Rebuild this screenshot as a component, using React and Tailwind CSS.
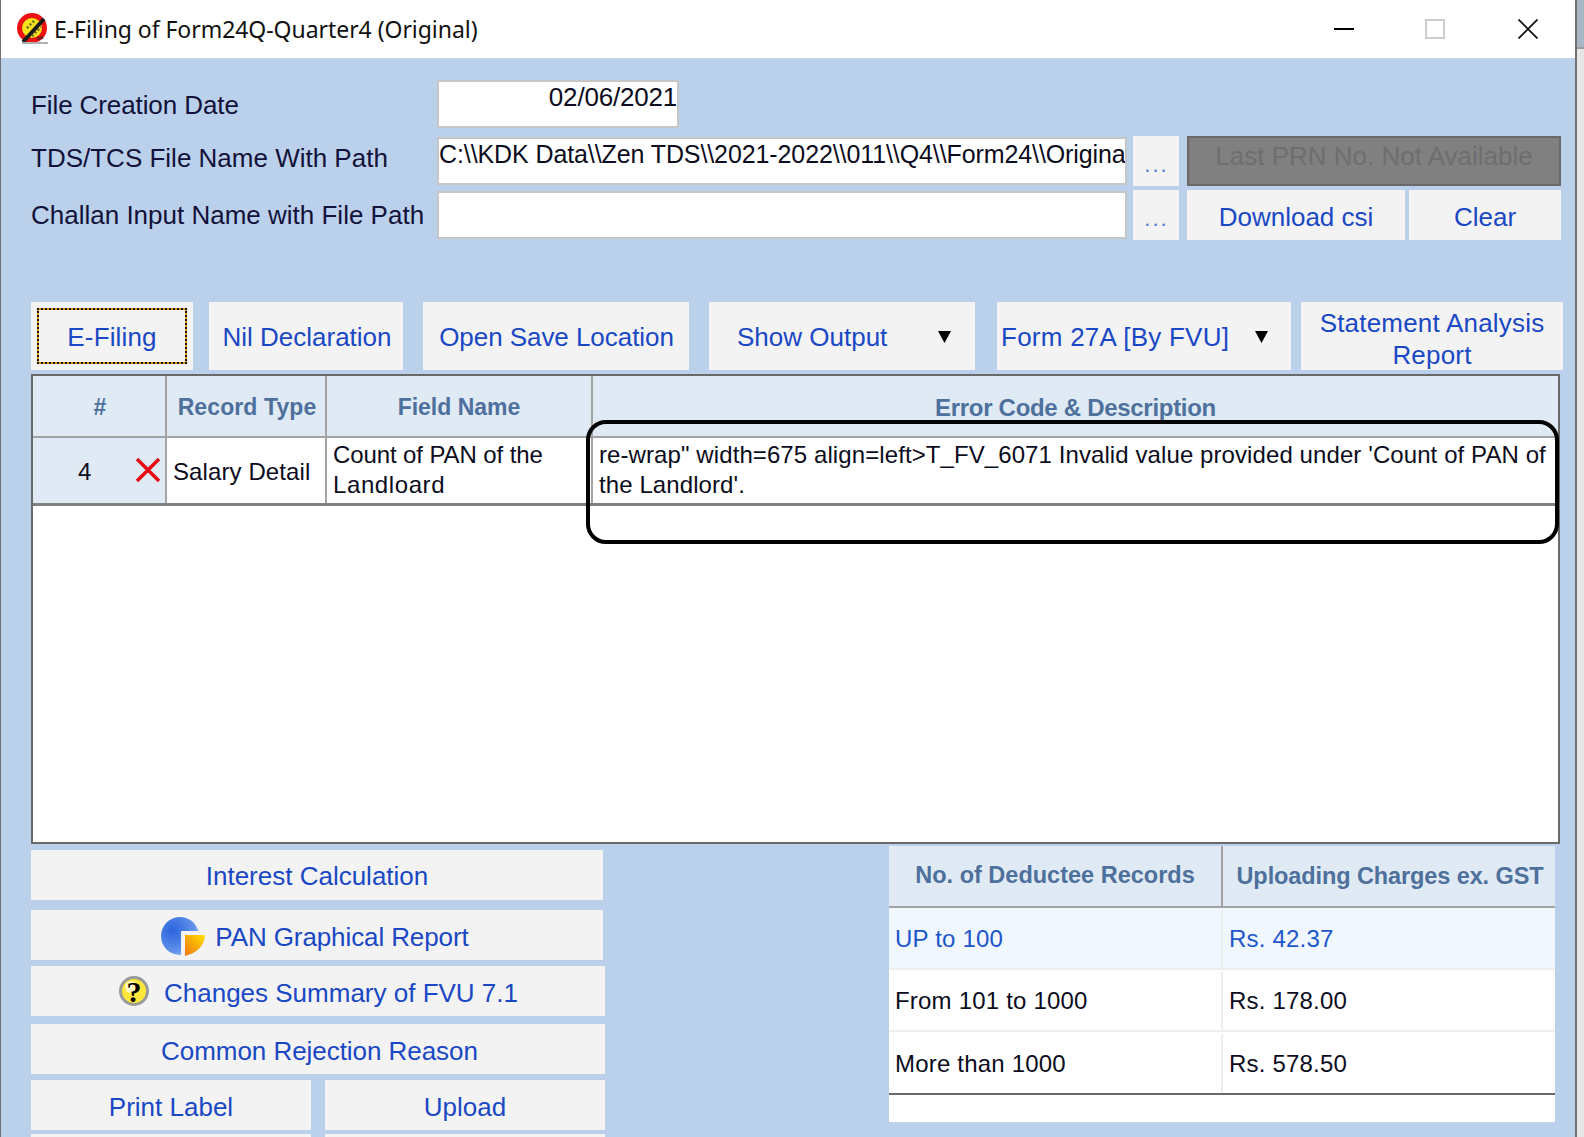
const Btn = ({ className = '', children }) => (
  <div className={`bg-[#f3f3f3] text-[#1a48c4] text-[26px] leading-[30px] flex items-center justify-center text-center ${className}`}>
    {children}
  </div>
);

const Field = ({ className = '', children }) => (
  <div className={`bg-white border-2 border-[#c6c6c6] text-[25px] leading-[30px] text-[#0c0c20] overflow-hidden whitespace-nowrap ${className}`}>
    {children}
  </div>
);

const Dots = () => (
  <Btn className="w-[46px] h-[50px] ml-[6px] pt-[8px] pl-[1px] !text-[#4a7fd6] !text-[22px] tracking-[2px]">...</Btn>
);

const Caret = () => (
  <svg width="13" height="12" viewBox="0 0 13 12" className="shrink-0">
    <polygon points="0,0 13,0 6.5,12" fill="#000" />
  </svg>
);

const TitleIcon = () => (
  <svg width="32" height="32" viewBox="0 0 32 32" className="shrink-0">
    <circle cx="15" cy="15" r="12.5" fill="#f4e21c" stroke="#ee1111" strokeWidth="5" />
    <path d="M6 29 L27 6" stroke="#1a1a1a" strokeWidth="4" />
    <path d="M10 15 L17 8 M15 23 L24 14" stroke="#6a6a20" strokeWidth="2.5" strokeDasharray="2 2" />
    <path d="M20 26 L26 24" stroke="#8a1a1a" strokeWidth="3" />
    <path d="M5 30 L31 30" stroke="#b0b0b0" strokeWidth="2" />
  </svg>
);

const PieIcon = () => (
  <svg width="46" height="42" viewBox="0 0 46 42" className="shrink-0">
    <defs>
      <radialGradient id="pieBlue" cx="0.3" cy="0.35" r="0.8">
        <stop offset="0" stopColor="#2c62dc" />
        <stop offset="0.7" stopColor="#5f92ea" />
        <stop offset="1" stopColor="#a8c4f0" />
      </radialGradient>
      <linearGradient id="pieOrange" x1="1" y1="0" x2="0" y2="1">
        <stop offset="0" stopColor="#ffe000" />
        <stop offset="1" stopColor="#f07810" />
      </linearGradient>
    </defs>
    <circle cx="19" cy="20" r="19" fill="url(#pieBlue)" />
    <rect x="20" y="15" width="26" height="27" fill="#f3f3f3" />
    <path d="M24 19 L44 19 Q43 35 24 40 Z" fill="url(#pieOrange)" />
  </svg>
);

const HelpIcon = () => (
  <svg width="32" height="32" viewBox="0 0 32 32" className="shrink-0 -mt-[4px]">
    <circle cx="16" cy="16" r="13.5" fill="#fde83a" stroke="#9a9a9a" strokeWidth="3" />
    <circle cx="13" cy="12" r="6" fill="#fff8c0" />
    <text x="16" y="27" textAnchor="middle" fontSize="30" fontWeight="700" fill="#000" fontFamily="'Liberation Serif', serif">?</text>
  </svg>
);

const headCell = 'flex items-center justify-center font-bold text-[#4d709c] pt-[3px]';
const headLine = 'border-r-2 border-[#a3a3a3]';

export default function App() {
  return (
    <div className="w-[1584px] h-[1137px] overflow-hidden flex font-['Liberation_Sans',Arial,sans-serif]">
      <div className="w-[1575px] h-full flex flex-col border-l border-[#707070]">
        {/* title bar */}
        <div className="h-[58px] shrink-0 bg-white flex items-center pl-[16px]">
          <TitleIcon />
          <span className="ml-[5px] text-[23px] tracking-[-0.05px] text-[#111] font-['Noto_Sans',sans-serif]">E-Filing of Form24Q-Quarter4 (Original)</span>
          <div className="ml-auto flex items-center">
            <div className="w-[20px] h-[2px] bg-black" />
            <div className="w-[20px] h-[20px] border-2 border-[#cccccc] ml-[71px]" />
            <svg width="20" height="20" viewBox="0 0 20 20" className="ml-[73px] mr-[37px]">
              <path d="M0.5 0.5 L19.5 19.5 M19.5 0.5 L0.5 19.5" stroke="#111" strokeWidth="1.8" />
            </svg>
          </div>
        </div>

        {/* form */}
        <div className="flex-1 min-h-0 bg-[#bbd0eb] pl-[30px] flex flex-col">
          <div className="flex items-center h-[48px] mt-[22px] shrink-0">
            <span className="w-[407px] text-[26px] text-[#12123a] tracking-[-0.1px] pt-[2px]">File Creation Date</span>
            <Field className="w-[242px] h-[48px] text-right !text-[26px] tracking-[-0.2px] -ml-[1px]">02/06/2021</Field>
          </div>
          <div className="flex items-center h-[50px] mt-[8px] shrink-0">
            <span className="w-[407px] text-[26px] text-[#12123a] -mt-[5px]">TDS/TCS File Name With Path</span>
            <Field className="w-[690px] h-[48px] -ml-[1px] tracking-[-0.1px]">{'C:\\\\KDK Data\\\\Zen TDS\\\\2021-2022\\\\011\\\\Q4\\\\Form24\\\\Origina'}</Field>
            <Dots />
            <div className="w-[374px] h-[50px] ml-[8px] pb-[10px] bg-[#808080] border-2 border-[#696969] text-[#6e6e6e] text-[26px] flex items-center justify-center">Last PRN No. Not Available</div>
          </div>
          <div className="flex items-center h-[50px] mt-[4px] shrink-0">
            <span className="w-[407px] text-[26px] text-[#12123a]">Challan Input Name with File Path</span>
            <Field className="w-[690px] h-[48px] -ml-[1px]" />
            <Dots />
            <Btn className="w-[218px] h-[50px] ml-[8px] pt-[3px]">Download csi</Btn>
            <Btn className="w-[152px] h-[50px] ml-[4px] pt-[3px]">Clear</Btn>
          </div>

          {/* toolbar */}
          <div className="flex h-[68px] mt-[62px] shrink-0">
            <Btn className="w-[162px] p-[6px]">
              <div className="w-full h-full border-2 border-dotted border-[#1a1208] bg-[#e59a1c]">
                <div className="w-full h-full bg-[#f3f3f3] flex items-center justify-center pt-[2px] tracking-[0.15px]">E-Filing</div>
              </div>
            </Btn>
            <Btn className="w-[194px] ml-[16px] pt-[2px] pl-[2px]">Nil Declaration</Btn>
            <Btn className="w-[266px] ml-[20px] pt-[2px] pl-[1px] tracking-[-0.05px]">Open Save Location</Btn>
            <Btn className="w-[266px] ml-[20px] !justify-start pl-[28px] pt-[2px]">
              <span>Show Output</span>
              <span className="ml-[51px]"><Caret /></span>
            </Btn>
            <Btn className="w-[294px] ml-[22px] !justify-start pl-[4px] pt-[2px]">
              <span className="tracking-[0.25px]">Form 27A [By FVU]</span>
              <span className="ml-[26px]"><Caret /></span>
            </Btn>
            <Btn className="w-[262px] ml-[10px] !leading-[32px] pt-[6px] tracking-[0.2px]">Statement Analysis<br />Report</Btn>
          </div>

          {/* error grid */}
          <div className="relative w-[1529px] h-[470px] mt-[4px] shrink-0 bg-white border-2 border-[#696969]">
            <div className="grid grid-cols-[134px_160px_266px_1fr] h-[62px] bg-[#e0eaf4] border-b-2 border-[#a3a3a3]">
              <div className={`${headCell} ${headLine} text-[23px] pl-[2px]`}>#</div>
              <div className={`${headCell} ${headLine} text-[23px] tracking-[0.1px] pl-[2px]`}>Record Type</div>
              <div className={`${headCell} ${headLine} text-[23px]`}>Field Name</div>
              <div className={`${headCell} text-[24px] tracking-[-0.3px]`}>Error Code &amp; Description</div>
            </div>
            <div className="grid grid-cols-[134px_160px_266px_1fr] h-[68px] border-b-[3px] border-[#808080] text-[24px] leading-[30px] text-[#0c0c20]">
              <div className="bg-[#e0eaf4] border-r-2 border-[#a3a3a3] flex items-center justify-between pl-[45px] pr-[5px]">
                <span className="pt-[2px]">4</span>
                <svg width="24" height="24" viewBox="0 0 24 24" className="-mt-[2px]">
                  <path d="M1 1 L23 23 M23 1 L1 23" stroke="#e60a14" strokeWidth="3.5" />
                </svg>
              </div>
              <div className="border-r-2 border-[#a3a3a3] flex items-center pl-[6px] pt-[3px] whitespace-nowrap tracking-[0.1px]">Salary Detail</div>
              <div className="border-r-2 border-[#a3a3a3] flex items-center pl-[6px]">
                <p className="-mt-[1px]"><span className="tracking-[-0.1px]">Count of PAN of the</span><br /><span className="tracking-[0.6px]">Landloard</span></p>
              </div>
              <div className="flex items-center pl-[6px] whitespace-nowrap">
                <p className="-mt-[1px] tracking-[0.09px]">re-wrap" width=675 align=left&gt;T_FV_6071 Invalid value provided under 'Count of PAN of<br />the Landlord'.</p>
              </div>
            </div>
            {/* hand drawn marker on the screenshot */}
            <div className="absolute left-[553px] top-[44px] w-[973px] h-[124px] border-[4px] border-black rounded-[20px]" />
          </div>

          {/* bottom */}
          <div className="flex shrink-0">
            <div className="w-[574px] flex flex-col pt-[6px]">
              <Btn className="w-[572px] h-[50px] shrink-0 pt-[2px]">Interest Calculation</Btn>
              <Btn className="w-[572px] h-[50px] shrink-0 mt-[10px] gap-[8px] pt-[3px] pr-[4px] tracking-[-0.1px]"><PieIcon /> PAN Graphical Report</Btn>
              <Btn className="w-[574px] h-[50px] shrink-0 mt-[6px] gap-[14px] pt-[3px]"><HelpIcon /> Changes Summary of FVU 7.1</Btn>
              <Btn className="w-[574px] h-[50px] shrink-0 mt-[8px] pt-[3px] pl-[3px] tracking-[-0.05px]">Common Rejection Reason</Btn>
              <div className="flex justify-between shrink-0 mt-[6px]">
                <Btn className="w-[280px] h-[50px] pt-[3px]">Print Label</Btn>
                <Btn className="w-[280px] h-[50px] pt-[3px]">Upload</Btn>
              </div>
              <div className="flex justify-between shrink-0 mt-[4px]">
                <Btn className="w-[280px] h-[50px]" />
                <Btn className="w-[280px] h-[50px]" />
              </div>
            </div>
            <div className="w-[666px] h-[276px] ml-[284px] mt-[2px] bg-white text-[24px] tracking-[0.2px]">
              <div className="grid grid-cols-[334px_1fr] h-[62px] bg-[#e0eaf4] border-b-2 border-[#a3a3a3] font-bold text-[#4d709c] text-[23.5px] tracking-normal pt-[2px]">
                <div className="border-r-2 border-[#a3a3a3] -mt-[2px] flex items-center justify-center">No. of Deductee Records</div>
                <div className="flex items-center justify-center pl-[2px] tracking-[-0.1px]">Uploading Charges ex. GST</div>
              </div>
              <div className="grid grid-cols-[334px_1fr] h-[62px] bg-[#f0f7ff] border-b-2 border-[#eeeeee] text-[#1c56c8] pt-[2px]">
                <div className="border-r-2 border-[#eeeeee] flex items-center pl-[6px]">UP to 100</div>
                <div className="flex items-center pl-[6px]">Rs. 42.37</div>
              </div>
              <div className="grid grid-cols-[334px_1fr] h-[62px] border-b-2 border-[#eeeeee] text-[#0c0c20] pt-[2px]">
                <div className="border-r-2 border-[#eeeeee] flex items-center pl-[6px]">From 101 to 1000</div>
                <div className="flex items-center pl-[6px]">Rs. 178.00</div>
              </div>
              <div className="grid grid-cols-[334px_1fr] h-[63px] border-b-2 border-[#696969] text-[#0c0c20] pt-[2px]">
                <div className="border-r-2 border-[#eeeeee] flex items-center pl-[6px]">More than 1000</div>
                <div className="flex items-center pl-[6px]">Rs. 578.50</div>
              </div>
            </div>
          </div>
        </div>
      </div>
      {/* what shows of the desktop behind the window */}
      <div className="flex-1 flex flex-col border-l-2 border-[#707070]">
        <div className="h-[47px] bg-[#a9b6c6]" />
        <div className="flex-1 bg-[#e6e6e6] border-t-2 border-[#9a9a9a]" />
      </div>
    </div>
  );
}
